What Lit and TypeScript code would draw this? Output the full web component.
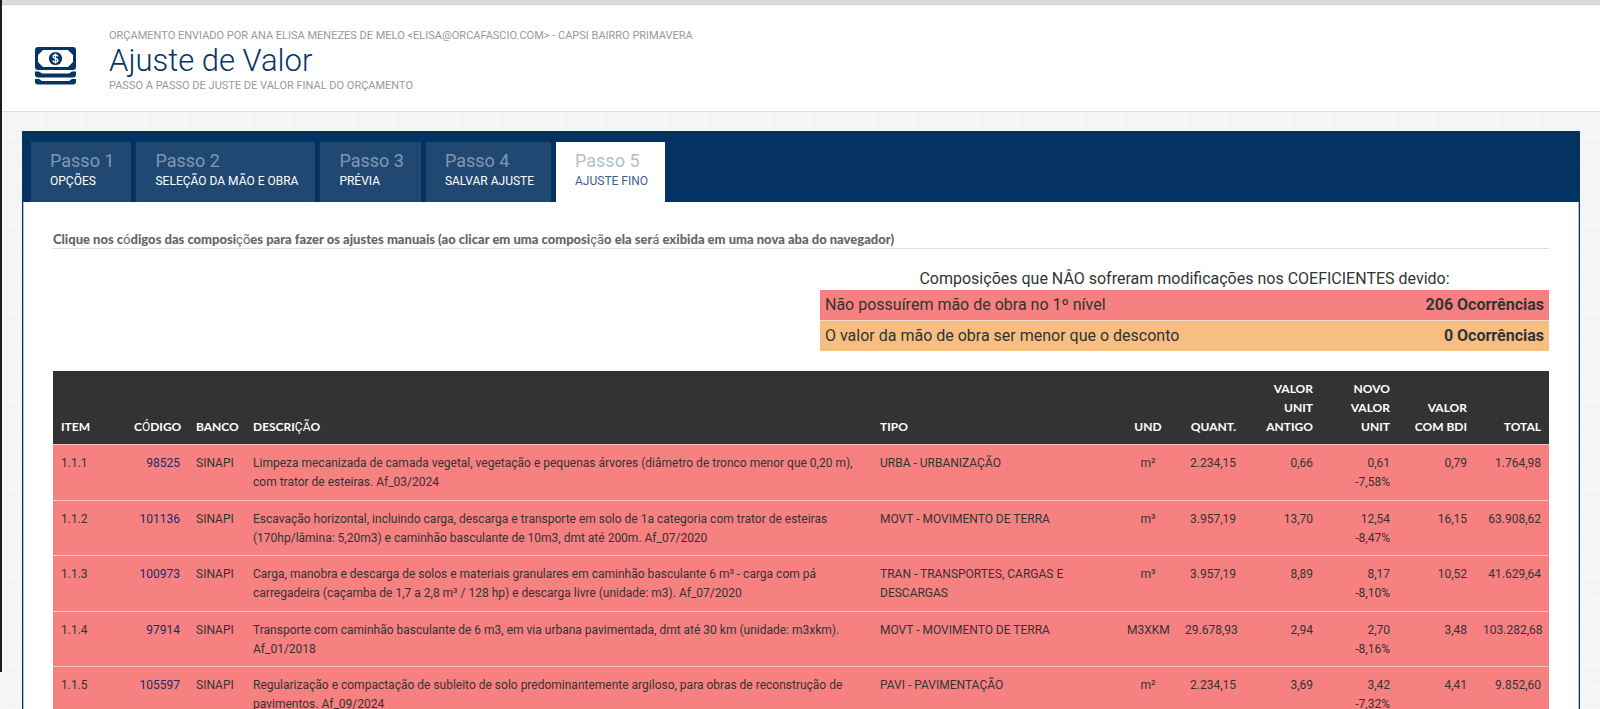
import { LitElement, html, css, svg } from "lit";
import { customElement } from "lit/decorators.js";

interface Step {
  title: string;
  label: string;
  active?: boolean;
}

interface Composition {
  item: string;
  code: string;
  bank: string;
  description: string;
  type: string;
  unit: string;
  quantity: string;
  oldValue: string;
  newValue: string;
  change: string;
  withBdi: string;
  total: string;
}

const STEPS: Step[] = [
  { title: "Passo 1", label: "Opções" },
  { title: "Passo 2", label: "Seleção da mão e obra" },
  { title: "Passo 3", label: "Prévia" },
  { title: "Passo 4", label: "Salvar ajuste" },
  { title: "Passo 5", label: "Ajuste fino", active: true },
];

const ROWS: Composition[] = [
  {
    item: "1.1.1", code: "98525", bank: "SINAPI",
    description: "Limpeza mecanizada de camada vegetal, vegetação e pequenas árvores (diâmetro de tronco menor que 0,20 m), com trator de esteiras. Af_03/2024",
    type: "URBA - URBANIZAÇÃO", unit: "m²", quantity: "2.234,15",
    oldValue: "0,66", newValue: "0,61", change: "-7,58%", withBdi: "0,79", total: "1.764,98",
  },
  {
    item: "1.1.2", code: "101136", bank: "SINAPI",
    description: "Escavação horizontal, incluindo carga, descarga e transporte em solo de 1a categoria com trator de esteiras (170hp/lâmina: 5,20m3) e caminhão basculante de 10m3, dmt até 200m. Af_07/2020",
    type: "MOVT - MOVIMENTO DE TERRA", unit: "m³", quantity: "3.957,19",
    oldValue: "13,70", newValue: "12,54", change: "-8,47%", withBdi: "16,15", total: "63.908,62",
  },
  {
    item: "1.1.3", code: "100973", bank: "SINAPI",
    description: "Carga, manobra e descarga de solos e materiais granulares em caminhão basculante 6 m³ - carga com pá carregadeira (caçamba de 1,7 a 2,8 m³ / 128 hp) e descarga livre (unidade: m3). Af_07/2020",
    type: "TRAN - TRANSPORTES, CARGAS E DESCARGAS", unit: "m³", quantity: "3.957,19",
    oldValue: "8,89", newValue: "8,17", change: "-8,10%", withBdi: "10,52", total: "41.629,64",
  },
  {
    item: "1.1.4", code: "97914", bank: "SINAPI",
    description: "Transporte com caminhão basculante de 6 m3, em via urbana pavimentada, dmt até 30 km (unidade: m3xkm). Af_01/2018",
    type: "MOVT - MOVIMENTO DE TERRA", unit: "M3XKM", quantity: "29.678,93",
    oldValue: "2,94", newValue: "2,70", change: "-8,16%", withBdi: "3,48", total: "103.282,68",
  },
  {
    item: "1.1.5", code: "105597", bank: "SINAPI",
    description: "Regularização e compactação de subleito de solo predominantemente argiloso, para obras de reconstrução de pavimentos. Af_09/2024",
    type: "PAVI - PAVIMENTAÇÃO", unit: "m²", quantity: "2.234,15",
    oldValue: "3,69", newValue: "3,42", change: "-7,32%", withBdi: "4,41", total: "9.852,60",
  },
];

// Accented letters of the heading face are set in the body face.
const heading = (text: string) =>
  text
    .split(/([À-ÿ]+)/)
    .map((part, i) => (i % 2 ? html`<span class="accent">${part}</span>` : part));

const moneyIcon = svg`
  <path fill="#063465" fill-rule="evenodd" d="M3 0h35a3 3 0 0 1 3 3v17a3 3 0 0 1-3 3H3a3 3 0 0 1-3-3V3a3 3 0 0 1 3-3zM8 3L3 8v7l5 5h25l5-5V8l-5-5z"/>
  <circle cx="20.500" cy="11.500" r="6.600" fill="#063465"/>
  <path fill="none" stroke="#fff" stroke-width="1.300" d="M23 9.300c-.6-1-1.500-1.300-2.500-1.300-1.400 0-2.400.6-2.400 1.700 0 2.500 4.900 1.100 4.900 3.600 0 1.100-1 1.800-2.500 1.800-1.200 0-2.200-.5-2.700-1.500M20.500 6.500v10"/>
  <path fill="#063465" d="M0 24.500h4l3 2h27l3-2h4v3a3 3 0 0 1-3 3H3a3 3 0 0 1-3-3z"/>
  <path fill="#063465" d="M0 32h4l3 2h27l3-2h4v2.500a3 3 0 0 1-3 3H3a3 3 0 0 1-3-3z"/>`;

@customElement("app-root")
export class AppRoot extends LitElement {
  static styles = css`
    :host {
      display: block;
      height: 100vh;
      overflow: hidden;
      box-sizing: border-box;
      font-family: Roboto, "Liberation Sans", sans-serif;
      font-size: 12px;
      line-height: 19px;
      color: #333;
      background: #f5f5f5;
    }
    * { box-sizing: border-box; }
    .frame {
      display: grid;
      grid-template-columns: 2px minmax(0, 1fr);
      grid-template-rows: 100%;
      height: 100%;
    }
    .edge { background: #1c1c1e; margin-bottom: 37px; }
    .page {
      background-color: #f5f5f5;
      background-image:
        repeating-linear-gradient(90deg, rgba(255, 255, 255, 0.3) 0 1px, transparent 1px 5px, rgba(0, 0, 0, 0.008) 5px 7px, transparent 7px 13px),
        repeating-linear-gradient(0deg, rgba(255, 255, 255, 0.3) 0 1px, transparent 1px 4px, rgba(0, 0, 0, 0.008) 4px 6px, transparent 6px 11px);
    }
    .topbar { height: 5px; background: #dcdcdc; border-bottom: 1px solid #d0d0d0; }
    .header {
      display: flex;
      align-items: flex-start;
      gap: 33px;
      padding: 23px 33px 17px;
      background: #fff;
      border-bottom: 1px solid #dedede;
    }
    .logo { display: block; width: 41px; height: 39px; margin-top: 19px; flex: none; }
    .meta { margin: 0; font-size: 11px; line-height: 16px; color: #999; text-transform: uppercase; }
    .title { margin: 0; font-size: 31px; line-height: 34px; font-weight: 300; color: #063465; }
    .panel { margin: 19px 20px 0; background: #fff; border: 1px solid #063465; }
    .tabs { display: flex; gap: 5px; padding: 10px 8px 0; background: #033263; }
    .tab {
      display: flex;
      flex-direction: column;
      padding: 9px 17px 10px 19px;
      line-height: 21px;
      background: #204872;
      color: #fff;
      text-decoration: none;
      text-transform: uppercase;
    }
    .step { font-size: 18px; line-height: 20px; text-transform: none; color: #8097b1; }
    .tab.active { background: #fff; color: #3b5f87; }
    .tab.active .step { color: #b0bfce; }
    .body { padding: 29px 29px 0; border: solid #a9bdd3; border-width: 0 1px; }
    .note {
      margin: 0 0 19px;
      border-bottom: 1px solid #ddd;
      font: 900 13px/17px Lato, sans-serif;
      color: #666;
    }
    .accent { font-family: Roboto, sans-serif; font-weight: 400; line-height: 1; }
    .legend { width: calc(50% - 19px); min-width: 560px; margin: 0 0 20px auto; border-collapse: collapse; font-size: 16px; }
    .legend caption { line-height: 22px; }
    .legend th, .legend td { padding: 5px; line-height: 20px; }
    .legend tr + tr { border-top: 1px solid #f2dcd2; }
    .legend th { text-align: left; font-weight: 400; }
    .legend td { text-align: right; font-weight: 700; }
    .red { background: #f78181; }
    .orange { background: #f6be81; }
    .grid { width: 100%; table-layout: fixed; border-collapse: collapse; }
    .grid thead { background: #333; }
    .grid th {
      padding: 8px;
      font-family: Lato, sans-serif;
      font-weight: 700;
      color: #fff;
      text-align: left;
      text-transform: uppercase;
      vertical-align: bottom;
    }
    .grid td { padding: 9px 8px 7px; vertical-align: top; background: #f78181; border-top: 1px solid #f2c4c6; }
    .grid tbody tr:nth-child(odd) td { padding-bottom: 8px; }
    .grid .num { text-align: right; }
    .grid .mid { text-align: center; }
    .code { color: #1a2a66; text-decoration: none; }
    .change { display: block; }
    .c-item { width: 73px; }
    .c-code { width: 62px; }
    .c-bank { width: 57px; }
    .c-type { width: 247px; }
    .c-unit { width: 58px; }
    .c-qty { width: 67px; }
    .c-value { width: 77px; }
    .c-total { width: 74px; }
  `;

  render() {
    return html`
      <div class="frame">
        <div class="edge"></div>
        <div class="page">
          <div class="topbar"></div>
          <header class="header">
            <svg class="logo" viewBox="0 0 41 39" aria-hidden="true">${moneyIcon}</svg>
            <div>
              <p class="meta">Orçamento enviado por Ana Elisa Menezes de Melo &lt;elisa@orcafascio.com&gt; - CAPSI Bairro Primavera</p>
              <h1 class="title">Ajuste de Valor</h1>
              <p class="meta">Passo a passo de juste de valor final do orçamento</p>
            </div>
          </header>
          <main class="panel">
            <nav class="tabs">
              ${STEPS.map((s) => html`
                <a class="tab ${s.active ? "active" : ""}" href="#"><span class="step">${s.title}</span><span>${s.label}</span></a>`)}
            </nav>
            <div class="body">
              <p class="note">${heading("Clique nos códigos das composições para fazer os ajustes manuais (ao clicar em uma composição ela será exibida em uma nova aba do navegador)")}</p>
              <table class="legend">
                <caption>Composições que NÂO sofreram modificações nos COEFICIENTES devido:</caption>
                <tbody>
                  <tr class="red"><th scope="row">Não possuírem mão de obra no 1º nível</th><td>206 Ocorrências</td></tr>
                  <tr class="orange"><th scope="row">O valor da mão de obra ser menor que o desconto</th><td>0 Ocorrências</td></tr>
                </tbody>
              </table>
              <table class="grid">
                <colgroup>
                  <col class="c-item"><col class="c-code"><col class="c-bank"><col>
                  <col class="c-type"><col class="c-unit"><col class="c-qty">
                  <col class="c-value"><col class="c-value"><col class="c-value"><col class="c-total">
                </colgroup>
                <thead>
                  <tr>
                    <th>Item</th>
                    <th class="num">${heading("CÓDIGO")}</th>
                    <th>Banco</th>
                    <th>${heading("DESCRIÇÃO")}</th>
                    <th>Tipo</th>
                    <th class="mid">Und</th>
                    <th class="num">Quant.</th>
                    <th class="num">Valor Unit Antigo</th>
                    <th class="num">Novo Valor Unit</th>
                    <th class="num">Valor com BDI</th>
                    <th class="num">Total</th>
                  </tr>
                </thead>
                <tbody>
                  ${ROWS.map((r) => html`
                    <tr>
                      <td>${r.item}</td>
                      <td class="num"><a class="code" href="#">${r.code}</a></td>
                      <td>${r.bank}</td>
                      <td>${r.description}</td>
                      <td>${r.type}</td>
                      <td class="mid">${r.unit}</td>
                      <td class="num">${r.quantity}</td>
                      <td class="num">${r.oldValue}</td>
                      <td class="num">${r.newValue}<span class="change">${r.change}</span></td>
                      <td class="num">${r.withBdi}</td>
                      <td class="num">${r.total}</td>
                    </tr>`)}
                </tbody>
              </table>
            </div>
          </main>
        </div>
      </div>
    `;
  }
}
